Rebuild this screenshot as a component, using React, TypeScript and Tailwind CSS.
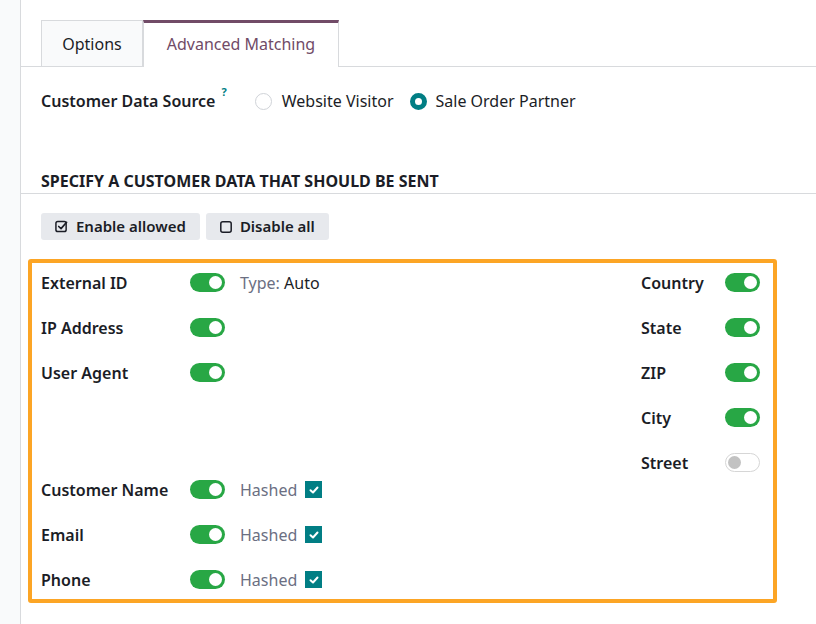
import { useState } from "react";

// Toggle switch used in the matching grid
function Toggle({ on }: { on: boolean }) {
  return (
    <span
      className={
        on
          ? "flex h-[19px] w-[35px] items-center justify-end rounded-full bg-[#28a745] px-[3px]"
          : "flex h-[19px] w-[35px] items-center justify-start rounded-full border border-[#d6d6d6] bg-white px-[2px]"
      }
    >
      <span className={on ? "h-[13px] w-[13px] rounded-full bg-white" : "h-[13px] w-[13px] rounded-full bg-[#c2c2c2]"} />
    </span>
  );
}

function Hashed() {
  return (
    <span className="flex items-center gap-2">
      <span className="text-[#6b6f82]">Hashed</span>
      <span className="flex h-[17px] w-[17px] items-center justify-center bg-[#017e84]">
        <svg width="10" height="8" viewBox="0 0 10 8" fill="none">
          <path d="M1.5 4.2 L4 6.5 L8.5 1.5" stroke="white" strokeWidth="2" strokeLinecap="round" strokeLinejoin="round" />
        </svg>
      </span>
    </span>
  );
}

function Row({ label, on = true, extra }: { label: string; on?: boolean; extra?: React.ReactNode }) {
  return (
    <div className="flex h-[45px] items-center">
      <span className="w-[149px] font-semibold">{label}</span>
      <Toggle on={on} />
      {extra && <span className="ml-[15px]">{extra}</span>}
    </div>
  );
}

function RightRow({ label, on = true }: { label: string; on?: boolean }) {
  return (
    <div className="flex h-[45px] items-center">
      <span className="w-[84px] font-semibold">{label}</span>
      <Toggle on={on} />
    </div>
  );
}

export default function App() {
  const [source, setSource] = useState("partner");

  return (
    <div className="flex min-h-[624px] bg-white text-[16px] text-[#1b1d26]" style={{ fontFamily: "'Noto Sans', sans-serif" }}>
      <div className="w-[21px] shrink-0 border-r border-[#d8dadd] bg-[#f9fafb]" />

      <div className="flex-1">
        {/* tabs */}
        <div className="flex border-b border-[#d8dadd] pl-[20px] pt-[20px]">
          <div className="-mb-px flex h-[47px] w-[102px] items-center justify-center border border-[#d8dadd] bg-[#f9fafb] text-[#1b1d26]">
            Options
          </div>
          <div className="-mb-px flex h-[47px] w-[196px] items-center justify-center border-x border-[#d8dadd] border-t-[3px] border-t-[#714b67] bg-white pb-[2px] text-[#714b67]">
            Advanced Matching
          </div>
        </div>

        {/* data source */}
        <div className="flex h-[68px] items-center pl-[20px]">
          <span className="font-semibold">Customer Data Source</span>
          <sup className="ml-[6px] -mt-2 text-[11px] font-bold text-[#017e84]">?</sup>
          <label className="ml-[28px] flex cursor-pointer items-center gap-[10px]" onClick={() => setSource("visitor")}>
            <span
              className={
                source === "visitor"
                  ? "h-[17px] w-[17px] rounded-full border-[5px] border-[#017e84] bg-white"
                  : "h-[17px] w-[17px] rounded-full border border-[#d0d3d8] bg-white"
              }
            />
            Website Visitor
          </label>
          <label className="ml-[16px] flex cursor-pointer items-center gap-[9px]" onClick={() => setSource("partner")}>
            <span
              className={
                source === "partner"
                  ? "h-[17px] w-[17px] rounded-full border-[5px] border-[#017e84] bg-white"
                  : "h-[17px] w-[17px] rounded-full border border-[#d0d3d8] bg-white"
              }
            />
            Sale Order Partner
          </label>
        </div>

        {/* section */}
        <div className="mt-[24px] border-b border-[#d8dadd] pl-[20px] pt-[11px] text-[16px] leading-[23px] font-bold uppercase">
          Specify a customer data that should be sent
        </div>

        <div className="mt-[19px] flex gap-[6px] pl-[20px] text-[15px] font-semibold">
          <button className="flex h-[27px] items-center gap-[8px] rounded-[3px] bg-[#e7e9ed] px-[14px]">
            <svg width="13" height="13" viewBox="0 0 14 14" fill="none">
              <rect x="1" y="1.5" width="11" height="11" rx="2" stroke="#1b1d26" strokeWidth="1.6" />
              <path d="M4 7 L6.5 9.3 L12.5 2.5" stroke="#1b1d26" strokeWidth="1.8" strokeLinecap="round" strokeLinejoin="round" />
            </svg>
            Enable allowed
          </button>
          <button className="flex h-[27px] items-center gap-[8px] rounded-[3px] bg-[#e7e9ed] px-[14px]">
            <svg width="12" height="12" viewBox="0 0 12 12" fill="none">
              <rect x="0.8" y="0.8" width="10.4" height="10.4" rx="2" stroke="#1b1d26" strokeWidth="1.5" />
            </svg>
            Disable all
          </button>
        </div>

        {/* matching grid */}
        <div className="ml-[7px] mt-[19px] w-[749px] rounded-[3px] border-[4px] border-[#fca525] pl-[9px] pr-[13px]">
          <div className="-my-[3px] flex justify-between">
            <div>
              <Row
                label="External ID"
                extra={
                  <span>
                    <span className="text-[#6b6f82]">Type:</span> Auto
                  </span>
                }
              />
              <Row label="IP Address" />
              <Row label="User Agent" />
              <div className="h-[72px]" />
              <Row label="Customer Name" extra={<Hashed />} />
              <Row label="Email" extra={<Hashed />} />
              <Row label="Phone" extra={<Hashed />} />
            </div>
            <div>
              <RightRow label="Country" />
              <RightRow label="State" />
              <RightRow label="ZIP" />
              <RightRow label="City" />
              <RightRow label="Street" on={false} />
            </div>
          </div>
        </div>
      </div>
    </div>
  );
}
